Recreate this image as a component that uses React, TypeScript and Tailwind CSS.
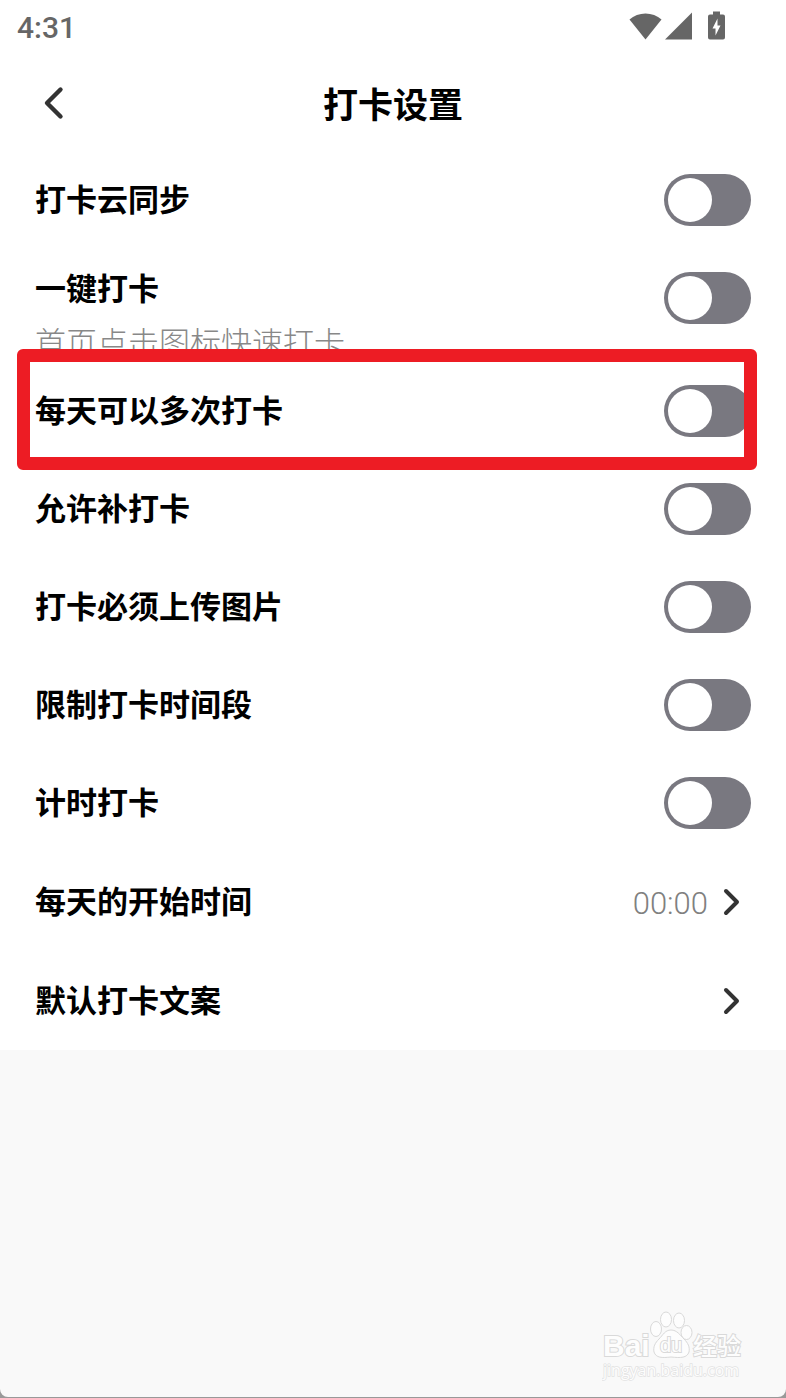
import { useState } from 'react';

type ToggleSetting = {
  id: string;
  label: string;
  hint?: string;
  highlighted?: boolean;
};

const TOGGLES: ToggleSetting[] = [
  { id: 'cloud-sync', label: '打卡云同步' },
  { id: 'one-tap', label: '一键打卡', hint: '首页点击图标快速打卡' },
  { id: 'multiple', label: '每天可以多次打卡', highlighted: true },
  { id: 'make-up', label: '允许补打卡' },
  { id: 'photo', label: '打卡必须上传图片' },
  { id: 'time-range', label: '限制打卡时间段' },
  { id: 'timer', label: '计时打卡' },
];

const LINKS = [
  { id: 'day-start', label: '每天的开始时间', value: '00:00' },
  { id: 'default-text', label: '默认打卡文案' },
];

function StatusBar() {
  return (
    <div className="flex h-14 items-center justify-between pl-[17px] pr-[61px] text-[#666]">
      <span className="font-[Roboto,sans-serif] text-[30px] leading-9 font-medium">4:31</span>
      <svg viewBox="0 0 96 30" className="mb-1 h-[30px] w-24" fill="currentColor" aria-hidden="true">
        <path d="M0.5 8.500C9 0.500 24 0.500 32.500 8.500L16.500 28.500Z" />
        <path d="M63 1.500V28.500H36Z" />
        <path
          fillRule="evenodd"
          d="M84 0.500H91V3.500H94Q96 3.500 96 5.500V26.500Q96 28.500 94 28.500H81Q79 28.500 79 26.500V5.500Q79 3.500 81 3.500H84ZM88.500 7.500L83.500 17.500H86.500V24.500L91.500 14.500H88.500Z"
        />
      </svg>
    </div>
  );
}

function Header() {
  return (
    <header className="grid h-[95px] grid-cols-[1fr_auto_1fr] items-center px-[35px]">
      <button type="button" aria-label="返回" className="w-9 text-[#333]">
        <svg viewBox="0 0 36 36" className="h-9 w-9" fill="none" stroke="currentColor" strokeWidth="4.4" strokeLinecap="round" strokeLinejoin="round">
          <path d="M25.500 3.500L12 17L25.500 30.500" />
        </svg>
      </button>
      <h1 className="pb-0.5 text-[35px] leading-[50px] font-bold">打卡设置</h1>
    </header>
  );
}

function ToggleRow({ id, label, hint, highlighted }: ToggleSetting) {
  const [on, setOn] = useState(false);

  return (
    <li className="relative flex items-start justify-between px-[35px] py-[23px]">
      <label htmlFor={id} className={hint ? 'h-[67px] leading-[30px]' : 'leading-[48px]'}>
        <span className="block text-[31px] font-bold">{label}</span>
        {hint && <span className="mt-6 block text-[31px] font-light text-[#888]">{hint}</span>}
      </label>
      <input
        id={id}
        type="checkbox"
        role="switch"
        checked={on}
        onChange={(e) => setOn(e.target.checked)}
        className="h-[52px] w-[87px] shrink-0 cursor-pointer appearance-none rounded-full bg-[#797880] p-1 before:block before:h-11 before:w-11 before:rounded-full before:bg-white before:transition-transform checked:bg-emerald-500 checked:before:translate-x-[35px]"
      />
      {highlighted && (
        <div className="pointer-events-none absolute -top-[13px] right-[29px] -bottom-[10px] left-[17px] rounded-md border-[13px] border-[#ed1c24]" />
      )}
    </li>
  );
}

function LinkRow({ label, value }: { label: string; value?: string }) {
  return (
    <li>
      <button type="button" className="flex h-[99px] w-full items-center pr-[42px] pl-[35px] text-left">
        <span className="flex-1 pb-1 text-[31px] leading-[48px] font-bold">{label}</span>
        {value && <span className="mr-2 pt-1 font-[Roboto,sans-serif] text-[31px] leading-9 font-light text-[#808080]">{value}</span>}
        <svg viewBox="0 0 28 36" className="h-9 w-7 text-[#333]" fill="none" stroke="currentColor" strokeWidth="4" strokeLinecap="round" strokeLinejoin="round" aria-hidden="true">
          <path d="M10 7L21 18L10 29" />
        </svg>
      </button>
    </li>
  );
}

function Watermark() {
  return (
    <svg viewBox="0 0 150 72" className="h-[72px] w-[150px]" fill="#fdfdfd" stroke="#d9d9d9" strokeWidth="1" role="img" aria-label="Baidu 经验">
      <text x="1" y="45" fontSize="30" strokeWidth="2" paintOrder="stroke" className="font-['Liberation_Sans',sans-serif] font-bold">Bai</text>
      <ellipse cx="54" cy="18" rx="5.500" ry="7.500" />
      <ellipse cx="64" cy="8.500" rx="5.500" ry="7.500" />
      <ellipse cx="77" cy="9.500" rx="5.500" ry="7.500" />
      <ellipse cx="84.500" cy="21.500" rx="5.500" ry="7" />
      <path d="M69 19C75 19 78 24 82 28C86 32 88 36 87 41C85 47 79 47 69 46C60 47 54 47 52 41C51 36 53 32 57 28C61 24 63 19 69 19Z" />
      <text x="58" y="41" fontSize="20" strokeWidth="2" paintOrder="stroke" className="font-['Liberation_Sans',sans-serif]">du</text>
      <text x="91" y="44" fontSize="24" strokeWidth="2" paintOrder="stroke" className="font-['Noto_Sans_CJK_SC',sans-serif] font-medium">经验</text>
      <text x="1" y="65" fontSize="16" stroke="#e2e2e2" strokeWidth="1.500" paintOrder="stroke" className="font-['Open_Sans',sans-serif]">jingyan.baidu.com</text>
    </svg>
  );
}

export default function App() {
  return (
    <div className="flex min-h-screen flex-col bg-[#999] pb-px font-['Noto_Sans_CJK_SC',sans-serif] text-black">
      <div className="flex flex-1 flex-col overflow-hidden rounded-b-lg bg-[#f9f9f9]">
        <div className="bg-white">
          <StatusBar />
          <Header />
          <ul>
            {TOGGLES.map((s) => (
              <ToggleRow key={s.id} {...s} />
            ))}
            {LINKS.map((l) => (
              <LinkRow key={l.id} label={l.label} value={l.value} />
            ))}
          </ul>
        </div>
        <footer className="flex flex-1 items-end justify-end pr-[34px] pb-[14px]">
          <Watermark />
        </footer>
      </div>
    </div>
  );
}
